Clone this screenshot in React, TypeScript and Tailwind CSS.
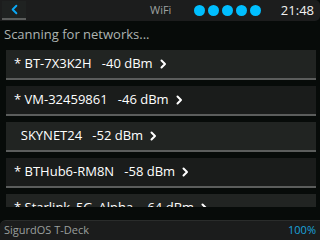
import { ChevronLeft } from "lucide-react";

type Network = {
  ssid: string;
  rssi: number;
  secured: boolean;
};

const networks: Network[] = [
  { ssid: "BT-7X3K2H", rssi: -40, secured: true },
  { ssid: "VM-32459861", rssi: -46, secured: true },
  { ssid: "SKYNET24", rssi: -52, secured: false },
  { ssid: "BTHub6-RM8N", rssi: -58, secured: true },
  { ssid: "Starlink_5G_Alpha", rssi: -64, secured: true },
];

const Chevron = () => (
  <svg width="7" height="10" viewBox="0 0 7 10" className="ml-[7px]">
    <path d="M1.5 1.5 L5 5 L1.5 8.5" stroke="#ffffff" strokeWidth="2" fill="none" strokeLinecap="round" strokeLinejoin="round" />
  </svg>
);

const App = () => {
  return (
    <main
      className="w-[320px] h-[240px] bg-[#070b09] flex flex-col overflow-hidden"
      style={{ fontFamily: "'Open Sans', 'DejaVu Sans', sans-serif" }}
    >
      <header className="h-[21px] bg-[#1c1d1d] rounded-r-[5px] flex items-center pr-[6px]">
        <div className="ml-[2px] w-[24px] h-[19px] bg-[#1f2221] border-b-2 border-[#5b5d5c] flex items-center justify-center">
          <ChevronLeft size={15} strokeWidth={3} color="#0aa8f5" />
        </div>
        <span className="ml-[124px] text-[11px] text-[#9ea3a1]">WiFi</span>
        <div className="ml-[23px] flex gap-[3px]">
          {[0, 1, 2, 3, 4].map((i) => (
            <span key={i} className="w-[11px] h-[11px] rounded-full bg-[#00bfff]" />
          ))}
        </div>
        <span className="ml-auto text-[13px] text-[#f2f2f2] leading-none">21:48</span>
      </header>

      <p className="px-[4px] pt-[4px] text-[13px] text-[#aeb4b1] leading-[18px]">Scanning for networks...</p>

      {/* list is clipped mid-row, like the device */}
      <div className="flex-1 overflow-hidden flex flex-col gap-[6px] pl-[6px] pr-[4px] pt-[7px] mb-[13px]">
        {networks.map((net, idx) => (
          <div
            key={idx}
            className={`shrink-0 h-[30px] border-b-2 border-[#5b5d5c] flex items-center pl-[8px] text-[13px] text-white whitespace-pre ${idx % 2 === 0 ? "bg-[#212422]" : "bg-[#1a1c1b]"}`}
          >
            <span>{`${net.secured ? "*" : " "} ${net.ssid}   ${net.rssi} dBm`}</span>
            <Chevron />
          </div>
        ))}
      </div>

      <footer className="h-[20px] bg-[#1b1c1c] border-t border-[#2a2c2b] rounded-tl-[6px] flex items-center justify-between px-[4px] text-[11px]">
        <span className="text-[#9a9f9d]">SigurdOS T-Deck</span>
        <span className="text-[#1aa3dc]">100%</span>
      </footer>
    </main>
  );
};

export default App;
